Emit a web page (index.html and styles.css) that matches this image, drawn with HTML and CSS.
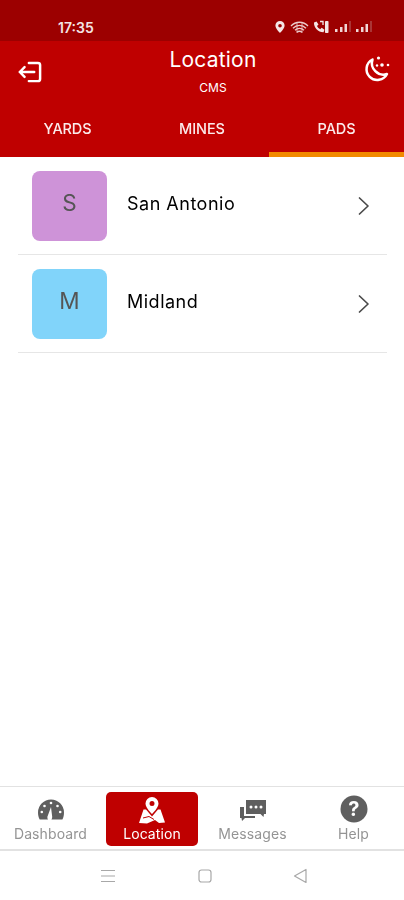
FILE: index.html
```html
<!DOCTYPE html>
<html lang="en">
<head>
<meta charset="utf-8">
<title>Location</title>
<link rel="stylesheet" href="styles.css">
</head>
<body>
<div class="app">
  <div class="statusbar">
    <span class="time">17:35</span>
    <div class="status-icons">
      <svg width="12" height="14" viewBox="0 0 12 14"><path fill="#f4e6e6" fill-rule="evenodd" d="M6 1a4.600 4.600 0 0 0-4.600 4.600C1.400 8.800 6 13 6 13s4.600-4.200 4.600-7.400A4.600 4.600 0 0 0 6 1zm0 2.900a1.800 1.800 0 1 1 0 3.600 1.800 1.800 0 0 1 0-3.600z"/></svg>
      <svg width="19" height="15" viewBox="0 0 19 15" fill="none" stroke="#eccccc" stroke-width="1.300"><path d="M1 6A11.500 11.500 0 0 1 18 6M3 8.200a9 9 0 0 1 13 0M5 10.300a6.400 6.400 0 0 1 9 0M7 12.300a3.500 3.500 0 0 1 5 0"/><path d="M7 2v11M12 2v11" stroke-width=".8"/></svg>
      <svg width="18" height="14" viewBox="0 0 18 14"><path fill="#f4e6e6" d="M2 2.500 4.500 1.500 6.500 4.500 5 6c.7 1.500 1.800 2.500 3.200 3.200l1.500-1.400 2.800 2-1 2.500C6.500 12.500 1.500 7.500 2 2.500z"/><rect x="13" y="1" width="3.500" height="12" rx=".8" fill="#f4e6e6"/><path d="M8 1.500h3v3.500" fill="none" stroke="#f4e6e6" stroke-width="1.300"/></svg>
      <svg class="signal" width="18" height="12" viewBox="0 0 18 12"><path fill="#f0d6d6" d="M1 8h2.500v3H1zM6 6h2.500v5H6zM10.500 3H13v8h-2.500z"/><path fill="#b76a6a" d="M15.500 0h1v11h-1z"/></svg>
      <svg class="signal" width="18" height="12" viewBox="0 0 18 12"><path fill="#f0d6d6" d="M1 8h2.500v3H1zM6 6h2.500v5H6zM10.500 3H13v8h-2.500z"/><path fill="#b76a6a" d="M15.500 0h1v11h-1z"/></svg>
    </div>
  </div>

  <header class="appbar">
    <div class="appbar-top">
      <svg class="appbar-icon" width="30" height="30" viewBox="0 0 28 28" fill="none" stroke="#fff" stroke-width="2.300" stroke-linecap="round" stroke-linejoin="round"><path d="M12 5.500h8.500a2 2 0 0 1 2 2v13a2 2 0 0 1-2 2H12"/><path d="M3.500 14H17M8 9.500 3.500 14 8 18.500"/></svg>
      <div class="titles">
        <div class="title">Location</div>
        <div class="subtitle">CMS</div>
      </div>
      <svg class="appbar-icon moon" width="28" height="28" viewBox="0 0 28 28" fill="none"><path d="M10.500 4.500A10.800 10.800 0 1 0 25 19 11.500 11.500 0 0 1 10.500 4.500z" stroke="#fff" stroke-width="2.500" stroke-linejoin="round"/><circle cx="16.500" cy="3" r="1.600" fill="#fff"/><circle cx="20" cy="10" r="1.800" fill="#fff"/><circle cx="26" cy="10" r="1.300" fill="#fff"/><circle cx="15" cy="10.500" r="1.200" fill="#fff"/></svg>
    </div>
    <nav class="tabs">
      <div class="tab">YARDS</div>
      <div class="tab">MINES</div>
      <div class="tab tab-active">PADS</div>
    </nav>
  </header>

  <main class="list">
    <div class="row">
      <div class="avatar avatar-purple">S</div>
      <div class="row-name">San Antonio</div>
      <svg class="chevron" width="14" height="20" viewBox="0 0 14 20" fill="none" stroke="#4a4a4a" stroke-width="1.700" stroke-linecap="round" stroke-linejoin="round"><path d="M2.500 2 11 10 2.500 18"/></svg>
    </div>
    <div class="row">
      <div class="avatar avatar-blue">M</div>
      <div class="row-name">Midland</div>
      <svg class="chevron" width="14" height="20" viewBox="0 0 14 20" fill="none" stroke="#4a4a4a" stroke-width="1.700" stroke-linecap="round" stroke-linejoin="round"><path d="M2.500 2 11 10 2.500 18"/></svg>
    </div>
  </main>

  <footer class="bottomnav">
    <div class="navitem">
      <svg class="lift" width="28" height="24" viewBox="0 0 28 24"><path fill="#5f5f5f" fill-rule="evenodd" d="M14 1.500A13 13 0 0 0 1 14.500c0 2.700.6 5 1.700 7H11c-.6-.8-.8-1.700-.6-2.700L14 9l1.200 9.800c.1 1-.2 1.900-.8 2.700h11c1.100-2 1.600-4.300 1.600-7A13 13 0 0 0 14 1.500z"/><g fill="#fff"><circle cx="14" cy="5" r="1.300"/><circle cx="7.500" cy="8" r="1.300"/><circle cx="20.500" cy="8" r="1.300"/><circle cx="4.800" cy="14" r="1.300"/><circle cx="23.200" cy="14" r="1.300"/></g></svg>
      <span>Dashboard</span>
    </div>
    <div class="navitem navitem-active">
      <svg width="28" height="28" viewBox="0 0 28 28"><path fill="#fff" fill-rule="evenodd" d="M14 0a6.500 6.500 0 0 0-6.500 6.500C7.500 11 14 17 14 17s6.500-6 6.500-10.500A6.500 6.500 0 0 0 14 0zm0 4a2.500 2.500 0 1 1 0 5 2.500 2.500 0 0 1 0-5z"/><path fill="#fff" d="M5.500 12.500H8l6 7 6-7h2.500L27 25.500l-6 .5-4-3-8 3.500-8-.5z"/><path d="M5 21l6-1.500 5 3" fill="none" stroke="#bf0000" stroke-width="1"/></svg>
      <span>Location</span>
    </div>
    <div class="navitem">
      <svg class="lift" width="28" height="24" viewBox="0 0 28 24"><path fill="#5f5f5f" d="M7 2h20v14h-2l-.5 3-3-3H7z"/><path fill="#5f5f5f" d="M1 9h4v9h11v2H6l-3 3-.5-3H1z"/><g fill="#fff"><circle cx="12" cy="9" r="1.500"/><circle cx="17" cy="9" r="1.500"/><circle cx="22" cy="9" r="1.500"/></g></svg>
      <span>Messages</span>
    </div>
    <div class="navitem">
      <svg class="lift-small" width="28" height="28" viewBox="0 0 28 28"><circle cx="14" cy="14" r="13.500" fill="#5f5f5f"/><text x="14" y="21" text-anchor="middle" class="help-mark">?</text></svg>
      <span>Help</span>
    </div>
  </footer>

  <div class="sysnav">
    <svg width="16" height="14" viewBox="0 0 16 14" stroke="#a8a8a8" stroke-width="1.200"><path d="M1 1.500h14M1 7h14M1 12.500h14"/></svg>
    <svg width="14" height="14" viewBox="0 0 14 14" fill="none" stroke="#a8a8a8" stroke-width="1.200"><rect x="1" y="1" width="12" height="12" rx="2.500"/></svg>
    <svg width="14" height="16" viewBox="0 0 14 16" fill="none" stroke="#a8a8a8" stroke-width="1.200" stroke-linejoin="round"><path d="M13 1.500v13L1.500 8z"/></svg>
  </div>
</div>
</body>
</html>
```
FILE: styles.css
```css
* { box-sizing: border-box; }
html, body { margin: 0; padding: 0; background: #fff; }
body { font-family: "Inter", "Lato", "Liberation Sans", sans-serif; }
.app { width: 404px; height: 900px; display: flex; flex-direction: column; overflow: hidden; filter: blur(0.6px); }

.statusbar { height: 41px; flex: none; background: #9c0000; display: flex; align-items: center; justify-content: space-between; padding: 13px 31px 0 58px; }
.time { color: #f3e4e4; font-size: 14px; font-weight: 600; }
.status-icons { display: flex; align-items: center; gap: 3.500px; }
.signal { margin-left: 0; }

.appbar { flex: none; background: #bf0000; color: #fff; display: flex; flex-direction: column; height: 116px; }
.appbar-top { display: flex; justify-content: space-between; align-items: flex-start; height: 73px; padding: 15px 14px 0 16px; }
.appbar-icon { flex: none; margin-top: 1px; }
.moon { margin-top: -1px; }
.titles { text-align: center; margin-left: 18px; }
.title { font-size: 21px; line-height: 25px; font-weight: 400; letter-spacing: .2px; margin-top: -9px; }
.subtitle { font-size: 12px; line-height: 14px; margin-top: 9px; letter-spacing: .1px; }
.tabs { display: grid; grid-template-columns: 135px 134px 135px; flex: 1; }
.tab { display: flex; align-items: center; justify-content: center; font-size: 14.500px; font-weight: 500; padding-bottom: 12px; color: #fbeaea; letter-spacing: -.1px; border-bottom: 5px solid transparent; padding-top: 3px; }
.tab-active { border-bottom-color: #f28a00; }

.list { flex: 1; padding: 0 17px 0 18px; }
.row { height: 98px; display: flex; align-items: center; border-bottom: 1px solid #e6e6e6; padding: 0 14px; }
.avatar { width: 75px; height: 70px; border-radius: 8px; display: flex; align-items: center; justify-content: center; font-size: 22.500px; color: #555; flex: none; padding-bottom: 6px; }
.avatar-purple { background: #ce93d8; }
.avatar-blue { background: #81d4fa; }
.row-name { flex: 1; margin-left: 20px; font-size: 18px; color: #000; margin-bottom: 4px; letter-spacing: .5px; }
.chevron { flex: none; margin-right: 2px; }

.bottomnav { flex: none; height: 65px; border-top: 1px solid #e2e2e2; border-bottom: 2px solid #e2e2e2; display: grid; grid-template-columns: 101px 101px 101px 101px; padding: 5px 0 4px; }
.navitem { display: flex; flex-direction: column; align-items: center; justify-content: flex-end; color: #949494; font-size: 14px; letter-spacing: .1px; height: 54px; border-radius: 5px; }
.navitem span { line-height: 16px; margin-top: 1px; padding-bottom: 4px; }
.navitem-active { background: #bf0000; color: #fff; width: 92px; margin-left: 5px; }
.lift { margin-bottom: 3px; }
.lift-small { margin-bottom: 2px; }
.help-mark { font-family: "Inter", sans-serif; font-size: 20px; font-weight: 700; fill: #fff; }

.sysnav { flex: none; height: 49px; display: flex; align-items: center; padding: 0 97px 0 100px; justify-content: space-between; }
```
